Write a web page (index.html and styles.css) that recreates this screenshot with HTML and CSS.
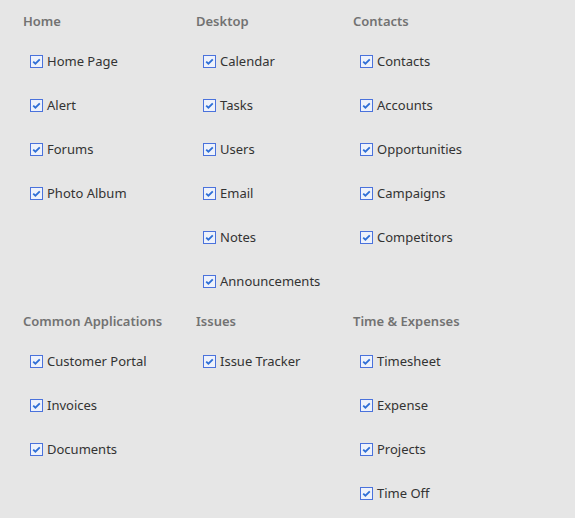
FILE: index.html
```html
<!DOCTYPE html>
<html lang="en">
  <head>
    <meta charset="UTF-8" />
    <title>Modules</title>
    <link rel="stylesheet" href="styles.css">
  </head>
  <body>
    <div class="modules">
      <!-- Первый ряд -->
      <div class="group">
        <h3>Home</h3>
        <ul>
          <li><span class="check"></span>Home Page</li>
          <li><span class="check"></span>Alert</li>
          <li><span class="check"></span>Forums</li>
          <li><span class="check"></span>Photo Album</li>
        </ul>
      </div>
      <div class="group">
        <h3>Desktop</h3>
        <ul>
          <li><span class="check"></span>Calendar</li>
          <li><span class="check"></span>Tasks</li>
          <li><span class="check"></span>Users</li>
          <li><span class="check"></span>Email</li>
          <li><span class="check"></span>Notes</li>
          <li><span class="check"></span>Announcements</li>
        </ul>
      </div>
      <div class="group">
        <h3>Contacts</h3>
        <ul>
          <li><span class="check"></span>Contacts</li>
          <li><span class="check"></span>Accounts</li>
          <li><span class="check"></span>Opportunities</li>
          <li><span class="check"></span>Campaigns</li>
          <li><span class="check"></span>Competitors</li>
        </ul>
      </div>

      <!-- Второй ряд -->
      <div class="group">
        <h3>Common Applications</h3>
        <ul>
          <li><span class="check"></span>Customer Portal</li>
          <li><span class="check"></span>Invoices</li>
          <li><span class="check"></span>Documents</li>
        </ul>
      </div>
      <div class="group">
        <h3>Issues</h3>
        <ul>
          <li><span class="check"></span>Issue Tracker</li>
        </ul>
      </div>
      <div class="group">
        <h3>Time &amp; Expenses</h3>
        <ul>
          <li><span class="check"></span>Timesheet</li>
          <li><span class="check"></span>Expense</li>
          <li><span class="check"></span>Projects</li>
          <li><span class="check"></span>Time Off</li>
        </ul>
      </div>
    </div>
  </body>
</html>
```

FILE: styles.css
```css
* {
  margin: 0;
  padding: 0;
  box-sizing: border-box;
}

body {
  font-family: "Noto Sans", "Open Sans", sans-serif;
  font-size: 13px;
  color: #333;
  background: #e6e6e6;
  padding: 12px 0 0 23px;
}

/* Сетка модулей: три колонки */
.modules {
  display: grid;
  grid-template-columns: 173px 157px 1fr;
  row-gap: 20px;
}

.group h3 {
  font-size: 13px;
  font-weight: 600;
  line-height: 18px;
  color: #727272;
}

.group ul {
  list-style: none;
  display: flex;
  flex-direction: column;
  gap: 22px;
  padding: 20px 0 0 7px;
}

.group li {
  display: flex;
  align-items: center;
  gap: 4px;
  height: 22px;
  white-space: nowrap;
}

/* Отмеченный чекбокс */
.check {
  width: 13px;
  height: 13px;
  flex: none;
  border: 1px solid #4a72dc;
  background: #eef2fb url("data:image/svg+xml,%3Csvg xmlns='http://www.w3.org/2000/svg' viewBox='0 0 11 11'%3E%3Cpath d='M2.2 5.6 4.4 7.7 8.8 3.3' fill='none' stroke='%232f6fd6' stroke-width='1.8'/%3E%3C/svg%3E") center / 11px 11px no-repeat;
}
```
